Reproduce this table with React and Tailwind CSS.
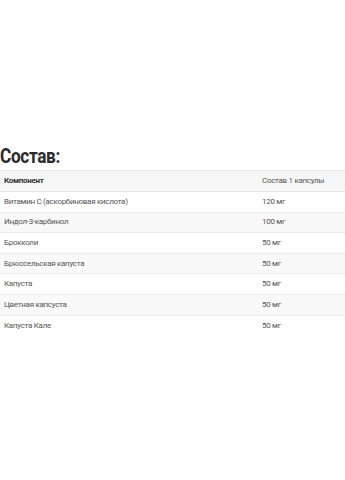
const rows = [
  ["Витамин С (аскорбиновая кислота)", "120 мг"],
  ["Индол-3-карбинол", "100 мг"],
  ["Брокколи", "50 мг"],
  ["Брюссельская капуста", "50 мг"],
  ["Капуста", "50 мг"],
  ["Цветная капсуста", "50 мг"],
  ["Капуста Кале", "50 мг"],
];

export default function App() {
  return (
    <div className="w-[345px] h-[480px] bg-white pt-[144px]" style={{ fontFamily: "Roboto, sans-serif" }}>
      <h2 className="w-fit origin-left scale-x-[0.86] text-[20px] leading-[24px] font-bold text-[#2b2b2b] tracking-[-0.4px]">Состав:</h2>
      <table className="w-full mt-[2px] border-collapse text-[8px] tracking-[-0.3px]">
        <thead>
          <tr className="bg-[#f7f7f7] border-y border-[#e8e8e8] h-[21px]">
            <th className="text-left font-bold text-[#333] pl-[4px] w-[262px]">Компонент</th>
            <th className="text-left font-normal text-[#555]">Состав 1 капсулы</th>
          </tr>
        </thead>
        <tbody>
          {rows.map(([name, dose], i) => (
            <tr key={name} className={`h-[20.6px] ${i < rows.length - 1 ? "border-b border-[#ececec]" : ""} ${i % 2 === 1 ? "bg-[#f9f9f9]" : "bg-white"}`}>
              <td className="pl-[4px] text-[#555]">{name}</td>
              <td className="text-[#555]">{dose}</td>
            </tr>
          ))}
        </tbody>
      </table>
    </div>
  );
}
